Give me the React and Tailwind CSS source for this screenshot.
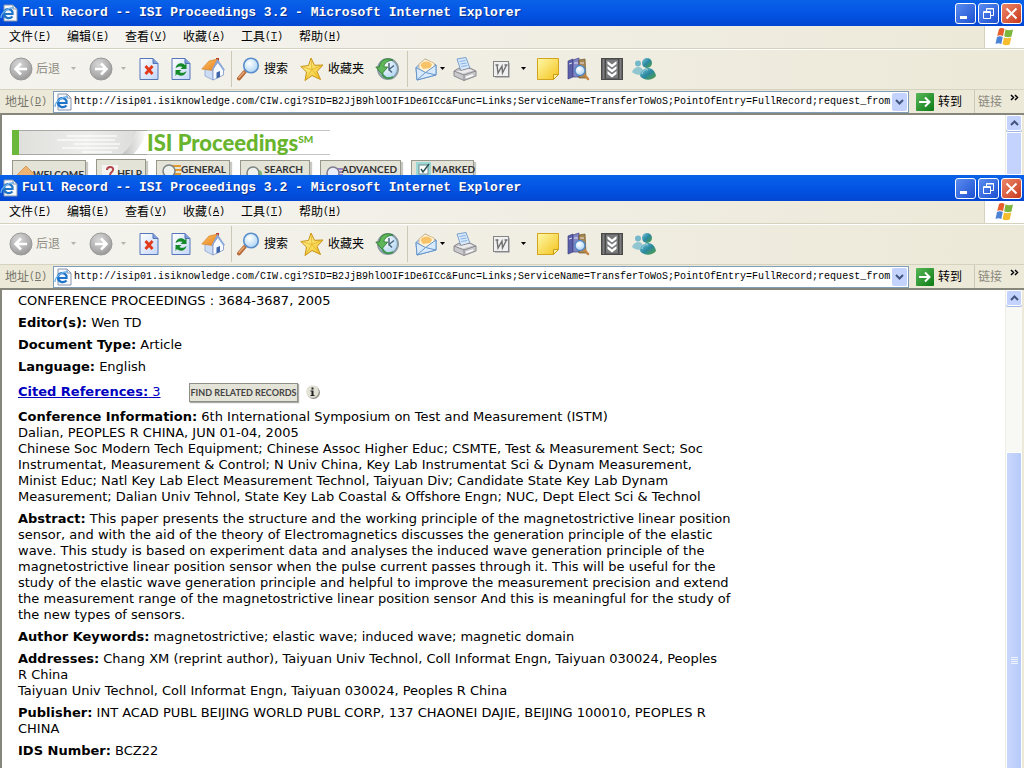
import React from 'react';

const menus = [
  { label: '文件', key: 'F' },
  { label: '编辑', key: 'E' },
  { label: '查看', key: 'V' },
  { label: '收藏', key: 'A' },
  { label: '工具', key: 'T' },
  { label: '帮助', key: 'H' },
];

const PAGE_URL =
  'http://isip01.isiknowledge.com/CIW.cgi?SID=B2JjB9hlOOIF1De6ICc&Func=Links;ServiceName=TransferToWoS;PointOfEntry=FullRecord;request_from';

// Gradients shared by all toolbar icons
const IconDefs = () => (
  <svg width="0" height="0" className="absolute" aria-hidden="true">
    <defs>
      <radialGradient id="grayBall" cx="0.4" cy="0.3" r="0.75">
        <stop offset="0" stopColor="#d8d8d8" />
        <stop offset="0.6" stopColor="#b2b2b2" />
        <stop offset="1" stopColor="#959595" />
      </radialGradient>
      <radialGradient id="blueBall" cx="0.4" cy="0.35" r="0.7">
        <stop offset="0" stopColor="#ffffff" />
        <stop offset="1" stopColor="#a9d2f3" />
      </radialGradient>
      <linearGradient id="sheet" x1="0" y1="0" x2="1" y2="1">
        <stop offset="0" stopColor="#ffffff" />
        <stop offset="1" stopColor="#c3d6f8" />
      </linearGradient>
      <linearGradient id="gold" x1="0" y1="0" x2="1" y2="1">
        <stop offset="0" stopColor="#fff9a8" />
        <stop offset="1" stopColor="#f3c21c" />
      </linearGradient>
      <linearGradient id="roof" x1="0" y1="0" x2="1" y2="1">
        <stop offset="0" stopColor="#ffc562" />
        <stop offset="1" stopColor="#e57f23" />
      </linearGradient>
      <linearGradient id="person" x1="0" y1="0" x2="1" y2="1">
        <stop offset="0" stopColor="#7fc7d8" />
        <stop offset="0.5" stopColor="#2a88a0" />
        <stop offset="1" stopColor="#56a23c" />
      </linearGradient>
      <linearGradient id="go" x1="0" y1="0" x2="1" y2="1">
        <stop offset="0" stopColor="#58b858" />
        <stop offset="1" stopColor="#0c7a14" />
      </linearGradient>
    </defs>
  </svg>
);

const Icon = ({ children }) => (
  <svg width="24" height="24" viewBox="0 0 24 24" className="shrink-0" fill="none">
    {children}
  </svg>
);

const Arrow = ({ flip }) => (
  <Icon>
    <circle cx="12" cy="12" r="11" fill="url(#grayBall)" stroke="#9a9a9a" />
    <path
      d={flip ? 'M6 12h11M12 6.5l5.5 5.5-5.5 5.5' : 'M18 12H7M12 6.5L6.5 12l5.5 5.5'}
      stroke="#fff"
      strokeWidth="2.6"
    />
  </Icon>
);

const StopIcon = () => (
  <Icon>
    <path d="M3 1.500h13l5 5v16H3z" fill="url(#sheet)" stroke="#5576b8" />
    <path d="M16 1.500v5h5" fill="#7f9ddb" stroke="#5576b8" />
    <path d="M8.500 9l7 8M15.500 9l-7 8" stroke="#e2391b" strokeWidth="2.800" />
  </Icon>
);

const RefreshIcon = () => (
  <Icon>
    <path d="M3 1.500h13l5 5v16H3z" fill="url(#sheet)" stroke="#5576b8" />
    <path d="M16 1.500v5h5" fill="#7f9ddb" stroke="#5576b8" />
    <path d="M6.500 11c1-5 6.500-6 9.500-3l1.500-2v6h-6l2-2C11.500 9 9 9.500 6.500 11z" fill="#168a2b" />
    <path d="M17.500 14c-1 5-6.500 6-9.500 3l-1.500 2v-6h6l-2 2c2 1.500 4.500 1 7-1z" fill="#168a2b" />
  </Icon>
);

// roof runs down to the left, white gable with a blue door on the right
const HomeIcon = () => (
  <Icon>
    <path d="M15 1h3v7h-3z" fill="#b8392b" />
    <path d="M4 12v7l8 4V12l-3-4z" fill="#cddcf5" stroke="#8ba4cf" strokeWidth="0.800" />
    <path d="M12 23V12l5-7 5.500 7v6z" fill="#f6faff" stroke="#7b96c6" strokeWidth="0.800" />
    <path d="M15.500 21.500v-6l3.500-1.500v6z" fill="#3f66aa" />
    <path d="M.8 12L8 4l8.500-2L11.500 13.500z" fill="url(#roof)" stroke="#cf7a25" strokeWidth="0.600" />
    <path d="M16.500 2l7.500 11-1.500 1-6-8.500-5 8.500-1-1z" fill="#8aa8d8" />
  </Icon>
);

const SearchIcon = () => (
  <Icon>
    <path d="M8.500 15L3 21.500" stroke="#b56a38" strokeWidth="4" strokeLinecap="round" />
    <path d="M8 15L3 20.500" stroke="#e9a877" strokeWidth="1.500" strokeLinecap="round" />
    <circle cx="15" cy="8.500" r="7.300" fill="url(#blueBall)" stroke="#5a8fcb" strokeWidth="1.600" />
  </Icon>
);

const StarIcon = () => (
  <Icon>
    <path
      d="M11 1l3.500 7.300 8.500-.3-6 6.500 3.500 8-8.500-4-7 5 1.500-8.500L.8 9.500 8.500 8.500z"
      fill="url(#gold)"
      stroke="#c79016"
      strokeLinejoin="round"
    />
    <path d="M11 1l1 11.500M23 8l-11 4.500 8.500 10M12 12.500l-7 11M12 12.500L.8 9.500" stroke="#e0ac24" strokeWidth="0.700" />
  </Icon>
);

const HistoryIcon = () => (
  <Icon>
    <circle cx="13" cy="12" r="10" fill="url(#blueBall)" stroke="#899aa2" strokeWidth="2" />
    <path d="M14 6v6.500l5-4M14 12.500l3 3" stroke="#49677e" strokeWidth="1.500" />
    <path d="M18 3C11 0 5 3 4.500 10H.8l6 7 6-7H9c0-4 4-6.500 9-7z" fill="#5fb75a" stroke="#27752d" strokeWidth="0.800" />
    <path d="M7 16c1.500 5 6 6.500 11 4" stroke="#3c944b" strokeWidth="1.800" />
  </Icon>
);

const MailIcon = () => (
  <Icon>
    <path d="M2 10.500L11 2l11 6v10L3 23z" fill="#c4ddf8" stroke="#6795cb" />
    <path d="M5 7L11 2l9 4 1 4-9 6-7-4z" fill="#fff4d8" stroke="#d3a86e" strokeWidth="0.700" />
    <path d="M6.500 8c3-5 10-4 11.500 0l-2 3-7 1z" fill="#f7c268" />
    <path d="M2 10.500l9.500 5L22 8v10L3 23z" fill="#d8eafc" stroke="#6795cb" />
    <path d="M3 23l8.500-7.500L22 18" stroke="#6795cb" />
  </Icon>
);

const PrinterIcon = () => (
  <Icon>
    <path d="M4 2l9-1.500 4 11-9 2.500z" fill="#d6e8fb" stroke="#7ba0cb" />
    <path d="M6.500 4.500l6-1M7.500 7l6-1M8.300 9.500l6-1" stroke="#87b1e0" />
    <path d="M1 14l5-3 2 2.500 9-2.500 6 3v5L11 23.500 1 19z" fill="#c9c9cc" stroke="#8a8a90" />
    <path d="M1 14l10 4 12-4" stroke="#8a8a90" />
    <path d="M11 18v5.500" stroke="#8a8a90" />
    <path d="M3 14l7 2.500 10-3-4-1.500-8 2z" fill="#ececee" />
    <path d="M13 20.500l7-2.500" stroke="#fff" strokeWidth="1.500" />
  </Icon>
);

const WordIcon = () => (
  <Icon>
    <rect x="4.500" y="4.500" width="15" height="15" fill="#f0f0f0" stroke="#858585" />
    <path d="M8 8l1 8 4-7 .5 7 4-8M6.500 8h3M15.500 8h3" stroke="#6f6f6f" strokeWidth="1.400" />
    <path d="M20.500 6v14.500H6" stroke="#bcbcbc" />
  </Icon>
);

const NoteIcon = () => (
  <Icon>
    <path d="M1.500 1.500h21v16l-5 5h-16z" fill="url(#gold)" stroke="#d3a51f" />
    <path d="M22.500 17.500h-5v5z" fill="#fff3a0" stroke="#c99a18" />
  </Icon>
);

const ResearchIcon = () => (
  <Icon>
    <path d="M2 4l5-2v18l-5 2z" fill="#5b5fa8" stroke="#3f4285" strokeWidth="0.700" />
    <path d="M7 3l6-2v19H7z" fill="#8487c5" stroke="#3f4285" strokeWidth="0.700" />
    <path d="M13 3l6-1 1 19h-7z" fill="#a8884f" stroke="#6d552b" strokeWidth="0.700" />
    <path d="M3 7l3-1M8 6h4M14 6h4" stroke="#e1e1f3" />
    <path d="M17.500 17l4.500 5" stroke="#c48442" strokeWidth="2.500" strokeLinecap="round" />
    <circle cx="14" cy="13.500" r="5" fill="url(#blueBall)" stroke="#5488c5" strokeWidth="1.400" />
  </Icon>
);

const FilmIcon = () => (
  <Icon>
    <rect x="1" y="1" width="22" height="22" fill="#4a4a4a" />
    <rect x="6" y="2.500" width="12" height="19" fill="#77797b" />
    <path d="M3.500 2v20M20.500 2v20" stroke="#7d7d7d" strokeWidth="2" />
    <path d="M7.500 4l4.500 3.500L16.500 4v3L12 10.500 7.500 7zM7.500 9l4.500 3.500L16.500 9v3L12 15.500 7.500 12zM7.500 14l4.500 3.500 4.500-3.500v3L12 20.500 7.500 17z" fill="#fff" />
  </Icon>
);

const MessengerIcon = () => (
  <Icon>
    <circle cx="6" cy="6.500" r="3" fill="#75b8c9" />
    <path d="M0 15c2-6 10-7 11-1l-2 4c-4 0-7-1-9-3z" fill="#8fc6cf" />
    <circle cx="15" cy="6" r="5" fill="url(#person)" />
    <path d="M8 19c1-10 14-11 16 0-4 5-12 5-16 0z" fill="url(#person)" />
    <path d="M10 17c1-4 4-5 6-4" stroke="#a6dae2" />
  </Icon>
);

const PageIcon = () => (
  <svg width="18" height="18" viewBox="0 0 18 18" className="shrink-0" fill="none">
    <path d="M4 1h9l4 4v12H4z" fill="#f6f8fd" stroke="#8795ae" />
    <path d="M13 1v4h4" stroke="#8795ae" />
    <path d="M12.500 12.500C9 16 3.500 13.500 4 9s6.500-5.500 8.500-1v2H5" stroke="#1f74c8" strokeWidth="2.200" />
    <path d="M1 14C1 9 7 4 14 3.500" stroke="#6eb1e8" strokeWidth="1.300" />
  </svg>
);

const FlagIcon = () => (
  <svg width="20" height="20" viewBox="0 0 20 20">
    <path d="M4 2c2-1.500 4-1 5.500 0L8 9c-2-1-4-1-5.800 0z" fill="#e65e2c" />
    <path d="M10.500 2.500c2.500 1 5 1 7.500 0L16.500 9.500c-2.500 1-5 .8-7.300-.2z" fill="#7db63c" />
    <path d="M2 10c2-1 4-1 5.800 0L6.300 17c-2-1.200-4-1-5.800 0z" fill="#4c83d4" />
    <path d="M9 10.500c2.500 1 4.800 1 7.300 0L14.700 17.500c-2.500 1-5 .8-7.200-.2z" fill="#f5bd2e" />
  </svg>
);

const Caret = ({ color = '#000' }) => (
  <svg width="5" height="3" viewBox="0 0 5 3" className="shrink-0">
    <path d="M0 0h5L2.500 3z" fill={color} />
  </svg>
);

const ToolButton = ({ label, className, children }) => (
  <button type="button" aria-label={label} className={`flex shrink-0 items-center ${className}`}>
    {children}
  </button>
);

const Divider = () => <div className="h-9 w-px shrink-0 bg-[#cbc8b8]" />;

const TitleBar = () => (
  <header className="flex h-[26px] shrink-0 items-center bg-linear-to-b from-[#0a62e8] via-[#0454e4] to-[#0246d2] pr-[2px] text-white">
    <PageIcon />
    <h1 className="ml-1 grow truncate font-['Liberation_Mono',monospace] text-[13px] font-bold [text-shadow:1px_1px_0_#0a2f8c]">
      Full Record -- ISI Proceedings 3.2 - Microsoft Internet Explorer
    </h1>
    <div className="flex gap-[2px]">
      <button type="button" aria-label="Minimize" className="size-[21px] rounded-[3px] border border-white bg-linear-to-br from-[#5c8cf0] to-[#1c4fd0]">
        <svg width="19" height="19" viewBox="0 0 19 19"><path d="M4 12h7v3H4z" fill="#fff" /></svg>
      </button>
      <button type="button" aria-label="Restore" className="size-[21px] rounded-[3px] border border-white bg-linear-to-br from-[#5c8cf0] to-[#1c4fd0]">
        <svg width="19" height="19" viewBox="0 0 19 19" fill="none" stroke="#fff">
          <path d="M7.500 7V4.500h7v7H12M7 5h8" />
          <path d="M4.500 7.500h7v7h-7zM4 8.500h8" />
        </svg>
      </button>
      <button type="button" aria-label="Close" className="size-[21px] rounded-[3px] border border-white bg-linear-to-br from-[#ec8668] to-[#c8371a]">
        <svg width="19" height="19" viewBox="0 0 19 19"><path d="M4.500 4.500l10 10M14.500 4.500l-10 10" stroke="#fff" strokeWidth="2" /></svg>
      </button>
    </div>
  </header>
);

const MenuBar = () => (
  <nav className="flex h-[23px] shrink-0 border-b border-[#d6d2c0] bg-linear-to-r from-[#f5f4f1] to-[#ece9d8]">
    {menus.map((m) => (
      <button key={m.key} type="button" className="flex w-[58px] items-center pl-[9px] text-black">
        {m.label}
        <span className="font-['Liberation_Mono',monospace] text-[10px]">
          (<u>{m.key}</u>)
        </span>
      </button>
    ))}
    <div className="ml-auto flex w-10 items-center justify-center border-l border-[#d6d2c0] bg-white">
      <FlagIcon />
    </div>
  </nav>
);

const ToolBar = () => (
  <div className="flex h-10 shrink-0 items-center border-t border-white bg-linear-to-r from-[#f4f3ee] to-[#ece9d8] pb-[2px] pl-[9px]">
    <ToolButton label="后退" className="w-20 gap-[3px] text-[#8f8d83]">
      <Arrow />
      <span>后退</span>
      <span className="ml-2"><Caret color="#b5b3a8" /></span>
    </ToolButton>
    <ToolButton label="前进" className="w-12 gap-2">
      <Arrow flip />
      <Caret color="#b5b3a8" />
    </ToolButton>
    <ToolButton label="停止" className="w-8"><StopIcon /></ToolButton>
    <ToolButton label="刷新" className="w-8"><RefreshIcon /></ToolButton>
    <ToolButton label="主页" className="w-[30px]"><HomeIcon /></ToolButton>
    <Divider />
    <ToolButton label="搜索" className="ml-1 w-16 gap-1">
      <SearchIcon />
      <span>搜索</span>
    </ToolButton>
    <ToolButton label="收藏夹" className="w-[75px] gap-1">
      <StarIcon />
      <span>收藏夹</span>
    </ToolButton>
    <ToolButton label="历史" className="w-8"><HistoryIcon /></ToolButton>
    <Divider />
    <ToolButton label="邮件" className="ml-[6px] w-[39px] gap-[2px]">
      <MailIcon />
      <Caret />
    </ToolButton>
    <ToolButton label="打印" className="w-9"><PrinterIcon /></ToolButton>
    <ToolButton label="编辑" className="w-[47px] gap-2">
      <WordIcon />
      <Caret />
    </ToolButton>
    <ToolButton label="讨论" className="w-[30px]"><NoteIcon /></ToolButton>
    <ToolButton label="信息检索" className="w-[34px]"><ResearchIcon /></ToolButton>
    <ToolButton label="下载" className="w-8"><FilmIcon /></ToolButton>
    <ToolButton label="Messenger" className="w-8"><MessengerIcon /></ToolButton>
  </div>
);

const AddressBar = ({ id }) => (
  <div className="flex h-[26px] shrink-0 items-center border-t border-b-2 border-t-[#d6d2c0] border-b-[#86867c] bg-[#ece9d8]">
    <label htmlFor={id} className="flex w-[53px] shrink-0 items-center pl-[5px] text-[#77756b]">
      地址
      <span className="font-['Liberation_Mono',monospace] text-[10px]">
        (<u>D</u>)
      </span>
    </label>
    <div className="flex h-[22px] min-w-0 grow items-center border border-[#7f9db9] bg-white">
      <PageIcon />
      <input
        id={id}
        type="text"
        defaultValue={PAGE_URL}
        className="ml-[2px] min-w-0 grow font-['Liberation_Mono',monospace] text-[10px] text-black outline-none"
      />
      <button type="button" aria-label="地址列表" className="mr-px flex h-[18px] w-[15px] shrink-0 items-center justify-center rounded-[2px] bg-[#c3d3fd]">
        <svg width="9" height="6" viewBox="0 0 9 6" fill="none"><path d="M1 1l3.500 3.500L8 1" stroke="#42567d" strokeWidth="2" /></svg>
      </button>
    </div>
    <button type="button" className="ml-[7px] flex shrink-0 items-center gap-1 text-black">
      <svg width="18" height="18" viewBox="0 0 18 18" fill="none">
        <rect width="18" height="18" rx="1" fill="url(#go)" />
        <path d="M3 9h10M9 4.500L13.500 9 9 13.500" stroke="#fff" strokeWidth="2" />
      </svg>
      <span>转到</span>
    </button>
    <div className="ml-3 flex h-full w-[50px] shrink-0 items-center border-l border-[#cbc8b8] pl-[3px] text-[#8a887d]">
      链接
      <button type="button" aria-label="更多链接" className="ml-2 mb-2">
        <svg width="9" height="7" viewBox="0 0 9 7" fill="none"><path d="M1 1l2.500 2.500L1 6M5 1l2.500 2.500L5 6" stroke="#000" strokeWidth="1.500" /></svg>
      </button>
    </div>
  </div>
);

const ScrollBar = ({ children }) => (
  <div className="flex w-[19px] shrink-0 flex-col border-r-2 border-l border-r-[#ece9d8] border-l-[#eeede5] bg-[#f8f8f4]">
    <button type="button" aria-label="Scroll up" className="flex h-4 shrink-0 items-center justify-center rounded-[2px] border border-white bg-[#c3d3fd] shadow-[0_1px_0_#9fb5e3]">
      <svg width="9" height="6" viewBox="0 0 9 6" fill="none"><path d="M1 5l3.500-3.500L8 5" stroke="#42567d" strokeWidth="2" /></svg>
    </button>
    {children}
  </div>
);

const BrowserWindow = ({ id, className, thumb, children }) => (
  <section className={`flex flex-col overflow-hidden bg-white ${className}`}>
    <TitleBar />
    <MenuBar />
    <ToolBar />
    <AddressBar id={id} />
    <div className="flex grow overflow-hidden border-l-2 border-[#86867c]">
      <main className="min-w-0 grow overflow-hidden">{children}</main>
      <ScrollBar>{thumb}</ScrollBar>
    </div>
  </section>
);

const NavButton = ({ className, label, children }) => (
  <button
    type="button"
    className={`flex h-7 items-start justify-between border border-[#97978c] bg-[#e4e3d8] pl-1 pr-[3px] font-['Lato',sans-serif] text-[10px] font-bold text-[#333] shadow-[2px_2px_1px_#c9c9c4] ${className}`}
  >
    <svg width="20" height="20" viewBox="0 0 20 20" fill="none" className="-mr-1 shrink-0">{children}</svg>
    {label}
  </button>
);

const ProceedingsPage = () => (
  <div className="pl-[10px] pt-[15px]">
    <div className="flex h-[25px] w-[318px] items-center">
      <svg width="135" height="25" viewBox="0 0 135 25" className="shrink-0">
        <defs>
          <linearGradient id="band">
            <stop offset="0" stopColor="#dededb" />
            <stop offset="0.600" stopColor="#ededeb" />
            <stop offset="1" stopColor="#dcdcda" />
          </linearGradient>
          <linearGradient id="bandEdge">
            <stop offset="0" stopColor="#bcbcba" />
            <stop offset="1" stopColor="#ffffff" />
          </linearGradient>
        </defs>
        <path d="M0 0h125c-3 11-8 18-16 25H0z" fill="url(#band)" />
        <path d="M125 0h10c-3 11-8 18-14 25h-12c8-7 13-14 16-25z" fill="url(#bandEdge)" />
        <path d="M55 6h50M45 10h58M62 14h46M50 18h56M70 22h30" stroke="#fff" strokeWidth="1.500" opacity="0.800" />
        <path d="M0 .5h135M0 24.500h135" stroke="#a5aaa2" />
        <path d="M0 0h7v25H0z" fill="#6cb83a" />
      </svg>
      <div className="flex h-full grow items-center whitespace-nowrap border-y border-[#c4c6c2] font-['Lato',sans-serif] text-[22px] font-black leading-none text-[#69b42d]">
        ISI Proceedings
        <span className="mb-2 text-[10px]">SM</span>
      </div>
    </div>
    <div className="mt-1 flex items-start leading-4">
      <NavButton label="WELCOME" className="mt-px w-[74px] pt-[5px]">
        <path d="M0 9l9-9 9 9-9 9z" fill="#eeb473" stroke="#d39a5c" />
      </NavButton>
      <NavButton label="HELP" className="ml-[10px] w-[50px] pt-[5px]">
        <rect x="1" y="0" width="16" height="18" fill="#f4f4f0" />
        <path d="M6 5c0-4 7-4 6 0 0 2-3 2-3 5M9 12v2" stroke="#b4454a" strokeWidth="2" />
      </NavButton>
      <NavButton label="GENERAL" className="ml-[10px] mt-px w-[74px]">
        <path d="M11 5h9M11 9h9M11 13h9" stroke="#e39a2d" strokeWidth="2" />
        <circle cx="8" cy="10" r="6" fill="#eef2ee" stroke="#7d8382" strokeWidth="1.500" />
      </NavButton>
      <NavButton label="SEARCH" className="ml-[10px] mt-px w-[70px] pr-[6px]">
        <circle cx="13" cy="13" r="4" fill="#74ba68" />
        <circle cx="8" cy="12" r="6" fill="#eef2ee" stroke="#7d8382" strokeWidth="1.500" />
      </NavButton>
      <NavButton label="ADVANCED" className="ml-[10px] mt-px w-[81px]">
        <path d="M11 8h7M11 11h7M11 14h7" stroke="#9b7fc0" strokeWidth="2" />
        <circle cx="8" cy="12" r="6" fill="#e8eefa" stroke="#7f7c90" strokeWidth="1.500" />
      </NavButton>
      <NavButton label="MARKED" className="ml-[10px] mt-px w-[63px]">
        <rect x="-1" y="1" width="16" height="19" fill="#9ed8d6" />
        <rect x="3" y="4" width="9" height="9" fill="#fff" stroke="#6c8b8b" />
        <path d="M5 8l2 3 6-8" stroke="#2c5252" strokeWidth="1.500" />
      </NavButton>
    </div>
  </div>
);

const Field = ({ name, children }) => (
  <p>
    <b>{name}:</b> {children}
  </p>
);

const RecordPage = () => (
  <article className="flex flex-col gap-[6px] whitespace-nowrap pl-4 pt-[3px] font-['DejaVu_Sans',sans-serif] text-[13px] leading-4 text-black">
    <p>CONFERENCE PROCEEDINGS : 3684-3687, 2005</p>
    <Field name="Editor(s)">Wen TD</Field>
    <Field name="Document Type">Article</Field>
    <Field name="Language">English</Field>
    <div className="flex h-[22px] items-center">
      <a href="#cited" className="w-[171px] text-[#0000c0] underline"><b>Cited References:</b> 3</a>
      <button type="button" className="h-[19px] w-[109px] border border-[#8f8f85] bg-[#e4e3d8] font-['Lato',sans-serif] text-[9px] font-bold leading-none text-[#444] shadow-[1px_1px_1px_#aaa]">
        FIND RELATED RECORDS
      </button>
      <button type="button" aria-label="Information" className="ml-2">
        <svg width="14" height="14" viewBox="0 0 14 14">
          <circle cx="7.500" cy="7.500" r="6.500" fill="#8f8f85" />
          <circle cx="6.500" cy="6.500" r="6.300" fill="#e2e1d6" />
          <path d="M5.500 2.500h2v2h-2zM4.500 5.500h3v4.500h1v1h-4v-1h1V6.500h-1z" fill="#222" />
        </svg>
      </button>
    </div>
    <Field name="Conference Information">
      6th International Symposium on Test and Measurement (ISTM)
      <br />
      Dalian, PEOPLES R CHINA, JUN 01-04, 2005
      <br />
      Chinese Soc Modern Tech Equipment; Chinese Assoc Higher Educ; CSMTE, Test &amp; Measurement Sect; Soc
      <br />
      Instrumentat, Measurement &amp; Control; N Univ China, Key Lab Instrumentat Sci &amp; Dynam Measurement,
      <br />
      Minist Educ; Natl Key Lab Elect Measurement Technol, Taiyuan Div; Candidate State Key Lab Dynam
      <br />
      Measurement; Dalian Univ Tehnol, State Key Lab Coastal &amp; Offshore Engn; NUC, Dept Elect Sci &amp; Technol
    </Field>
    <Field name="Abstract">
      This paper presents the structure and the working principle of the magnetostrictive linear position
      <br />
      sensor, and with the aid of the theory of Electromagnetics discusses the generation principle of the elastic
      <br />
      wave. This study is based on experiment data and analyses the induced wave generation principle of the
      <br />
      magnetostrictive linear position sensor when the pulse current passes through it. This will be useful for the
      <br />
      study of the elastic wave generation principle and helpful to improve the measurement precision and extend
      <br />
      the measurement range of the magnetostrictive linear position sensor And this is meaningful for the study of
      <br />
      the new types of sensors.
    </Field>
    <Field name="Author Keywords">magnetostrictive; elastic wave; induced wave; magnetic domain</Field>
    <Field name="Addresses">
      Chang XM (reprint author), Taiyuan Univ Technol, Coll Informat Engn, Taiyuan 030024, Peoples
      <br />
      R China
      <br />
      Taiyuan Univ Technol, Coll Informat Engn, Taiyuan 030024, Peoples R China
    </Field>
    <Field name="Publisher">
      INT ACAD PUBL BEIJING WORLD PUBL CORP, 137 CHAONEI DAJIE, BEIJING 100010, PEOPLES R
      <br />
      CHINA
    </Field>
    <Field name="IDS Number">BCZ22</Field>
  </article>
);

const App = () => (
  <div className="flex min-h-screen flex-col bg-white font-['Liberation_Sans','Noto_Sans_CJK_SC',sans-serif] text-[12px] leading-4">
    <IconDefs />
    {/* Only the top of the back window shows above the front one */}
    <BrowserWindow
      id="address-back"
      className="h-[175px] shrink-0"
      thumb={<div className="mt-px grow rounded-t-[2px] border border-white bg-[#c3d3fd]" />}
    >
      <ProceedingsPage />
    </BrowserWindow>
    <BrowserWindow
      id="address-front"
      className="grow"
      thumb={
        <div className="mt-[146px] flex grow flex-col rounded-t-[2px] border border-b-0 border-white bg-linear-to-r from-[#c9d7fd] to-[#b7cbf9] pt-[204px]">
          <div className="mx-auto flex flex-col gap-px">
            <span className="h-px w-[7px] bg-[#eef4fe]" />
            <span className="h-px w-[7px] bg-[#eef4fe]" />
            <span className="h-px w-[7px] bg-[#eef4fe]" />
            <span className="h-px w-[7px] bg-[#eef4fe]" />
          </div>
        </div>
      }
    >
      <RecordPage />
    </BrowserWindow>
  </div>
);

export default App;
